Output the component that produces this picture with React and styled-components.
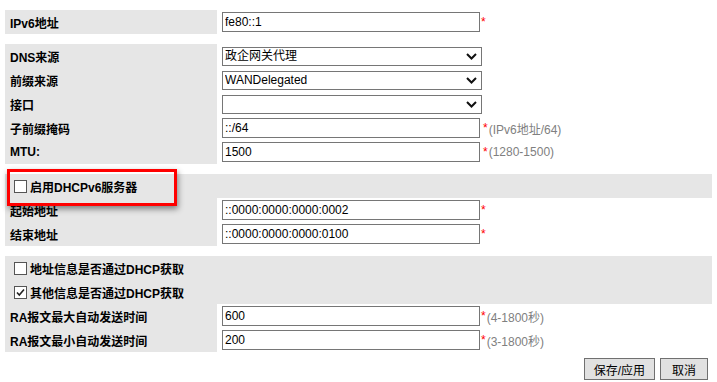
import React from 'react'
import styled, { createGlobalStyle } from 'styled-components'

const GlobalStyle = createGlobalStyle`
   html, body {
      margin: 0;
      padding: 0;
      background: #fff;
   }
   body {
      font-family: 'Liberation Sans', 'Noto Sans CJK SC', sans-serif;
      font-size: 12px;
      color: #000;
   }
`

const Page = styled.div`
   width: 707px;
   padding: 10px 0 0 5px;
`

const Section = styled.div`
   margin-bottom: 10px;
`

const Row = styled.div`
   display: grid;
   grid-template-columns: 212px 1fr;
   height: 24px;
`

const Label = styled.div`
   display: flex;
   align-items: center;
   padding-left: 5px;
   background: #e6e6e6;
   font-weight: bold;
   white-space: nowrap;
`

const Value = styled.div`
   display: flex;
   align-items: center;
   padding-left: 5px;
   background: #fff;
`

const FullRow = styled.div`
   position: relative;
   display: flex;
   align-items: center;
   gap: 3px;
   height: 24px;
   padding-left: 9px;
   background: #e6e6e6;
   font-weight: bold;
`

const TextInput = styled.input`
   box-sizing: border-box;
   width: 258px;
   height: 20px;
   margin: 0;
   padding: 0 2px;
   border: 1px solid #767676;
   font-family: 'Liberation Sans', 'Noto Sans CJK SC', sans-serif;
   font-size: 12px;
   color: #000;
   outline: none;
`

const SelectWrap = styled.div`
   position: relative;
   width: 260px;
   height: 19px;
`

const Select = styled.select`
   appearance: none;
   box-sizing: border-box;
   width: 100%;
   height: 100%;
   margin: 0;
   padding: 0 20px 0 2px;
   border: 1px solid #767676;
   border-radius: 0;
   background: #fff;
   font-family: 'Liberation Sans', 'Noto Sans CJK SC', sans-serif;
   font-size: 12px;
   color: #000;
   outline: none;
`

const Chevron = styled.svg`
   position: absolute;
   right: 5px;
   top: 6px;
   pointer-events: none;
`

const Star = styled.span`
   color: #ff0000;
   margin-left: ${(p) => p.$gap}px;
   font-size: 12px;
`

const Hint = styled.span`
   color: #808080;
   margin-left: 1px;
`

const Box = styled.span`
   box-sizing: border-box;
   display: inline-flex;
   align-items: center;
   justify-content: center;
   width: 13px;
   height: 13px;
   border: 1px solid #555;
   background: #fff;
`

const Highlight = styled.div`
   position: absolute;
   left: 2px;
   top: -5px;
   width: 170px;
   height: 37px;
   box-sizing: border-box;
   border: 3px solid #ff0000;
   box-shadow: 1px 3px 6px rgba(0, 0, 0, 0.45);
   pointer-events: none;
`

const Buttons = styled.div`
   display: flex;
   justify-content: flex-end;
   gap: 5px;
   margin-top: -4px;
   padding-right: 4px;
`

const Button = styled.button`
   box-sizing: border-box;
   height: 22px;
   padding: 0 ${(p) => p.$pad}px;
   border: 1px solid #707070;
   background: #e1e1e1;
   font-family: 'Liberation Sans', 'Noto Sans CJK SC', sans-serif;
   font-size: 12px;
   color: #000;
   border-radius: 0;
`

const Check = ({ checked }) => (
   <Box>
      {checked && (
         <svg width='11' height='11' viewBox='0 0 11 11'>
            <path d='M2 5.5 L4.3 8 L9 2.5' fill='none' stroke='#222' strokeWidth='1.6' />
         </svg>
      )}
   </Box>
)

const InputRow = ({ label, value, hint, gap = 3 }) => (
   <Row>
      <Label>{label}</Label>
      <Value>
         <TextInput defaultValue={value} />
         <Star $gap={gap}>*</Star>
         {hint && <Hint>{hint}</Hint>}
      </Value>
   </Row>
)

const SelectRow = ({ label, value }) => (
   <Row>
      <Label>{label}</Label>
      <Value>
         <SelectWrap>
            <Select defaultValue={value}>
               <option value={value}>{value}</option>
            </Select>
            <Chevron width='11' height='7' viewBox='0 0 11 7'>
               <path d='M1 1 L5.5 5.5 L10 1' fill='none' stroke='#111' strokeWidth='2' />
            </Chevron>
         </SelectWrap>
      </Value>
   </Row>
)

const App = () => {
   return (
      <>
         <GlobalStyle />
         <Page>
            <Section>
               <InputRow label='IPv6地址' value='fe80::1' gap={1} />
            </Section>
            <Section>
               <SelectRow label='DNS来源' value='政企网关代理' />
               <SelectRow label='前缀来源' value='WANDelegated' />
               <SelectRow label='接口' value='' />
               <InputRow label='子前缀掩码' value='::/64' hint='(IPv6地址/64)' />
               <InputRow label='MTU:' value='1500' hint='(1280-1500)' />
            </Section>
            <Section>
               <FullRow>
                  <Check />
                  启用DHCPv6服务器
                  <Highlight />
               </FullRow>
               <InputRow label='起始地址' value='::0000:0000:0000:0002' gap={1} />
               <InputRow label='结束地址' value='::0000:0000:0000:0100' gap={1} />
            </Section>
            <Section>
               <FullRow>
                  <Check />
                  地址信息是否通过DHCP获取
               </FullRow>
               <FullRow>
                  <Check checked />
                  其他信息是否通过DHCP获取
               </FullRow>
               <InputRow label='RA报文最大自动发送时间' value='600' hint='(4-1800秒)' gap={1} />
               <InputRow label='RA报文最小自动发送时间' value='200' hint='(3-1800秒)' gap={1} />
            </Section>
            <Buttons>
               <Button $pad={9}>保存/应用</Button>
               <Button $pad={11}>取消</Button>
            </Buttons>
         </Page>
      </>
   )
}

export default App
